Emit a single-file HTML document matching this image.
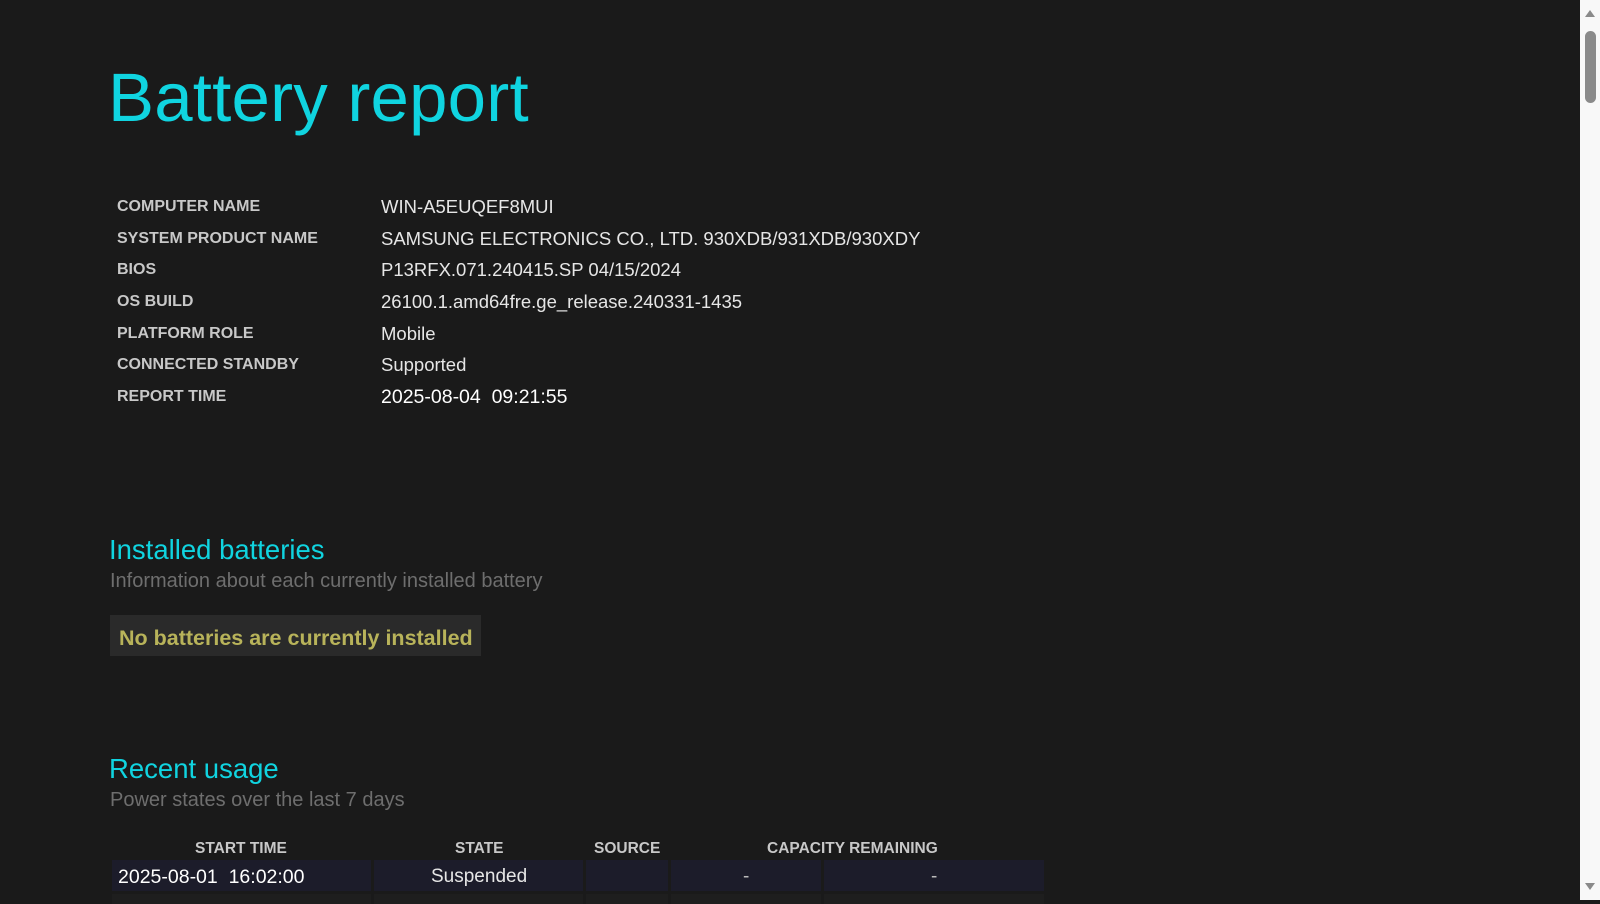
<!DOCTYPE html>
<html><head><meta charset="utf-8"><style>
html,body{margin:0;padding:0;width:1600px;height:900px;overflow:hidden;background:#1a1a1a;font-family:"Liberation Sans",sans-serif;}
.a{position:absolute;white-space:nowrap;}
.lab{color:#c8c8c8;font-size:16px;font-weight:bold;left:117px;}
.val{color:#e6e6e6;font-size:18.5px;left:381px;}
.h2{color:#10d4e0;font-size:27.5px;left:109px;}
.sub{color:#6e6e6e;font-size:20px;left:110px;}
.th{color:#c8c8c8;font-size:15.5px;font-weight:bold;top:840px;}
.cell{position:absolute;top:860px;height:31px;background:#1c1c2a;}
.row2{position:absolute;top:894px;height:10px;background:#1e1e1e;}
</style></head><body>
<div class="a" style="left:108px;top:58px;font-size:69px;color:#10d4e0;letter-spacing:0.2px;">Battery report</div>

<div class="a lab" style="top:198px">COMPUTER NAME</div><div class="a val" style="top:196px">WIN-A5EUQEF8MUI</div>
<div class="a lab" style="top:230px">SYSTEM PRODUCT NAME</div><div class="a val" style="top:228px">SAMSUNG ELECTRONICS CO., LTD. 930XDB/931XDB/930XDY</div>
<div class="a lab" style="top:261px">BIOS</div><div class="a val" style="top:259px">P13RFX.071.240415.SP 04/15/2024</div>
<div class="a lab" style="top:293px">OS BUILD</div><div class="a val" style="top:291px">26100.1.amd64fre.ge_release.240331-1435</div>
<div class="a lab" style="top:325px">PLATFORM ROLE</div><div class="a val" style="top:323px">Mobile</div>
<div class="a lab" style="top:356px">CONNECTED STANDBY</div><div class="a val" style="top:354px">Supported</div>
<div class="a lab" style="top:388px">REPORT TIME</div><div class="a val" style="top:386px;color:#fff;font-size:19.5px">2025-08-04&nbsp; 09:21:55</div>

<div class="a h2" style="top:534px">Installed batteries</div>
<div class="a sub" style="top:570px">Information about each currently installed battery</div>
<div class="a" style="left:110px;top:615px;width:371px;height:41px;background:#2a2a2a;"></div>
<div class="a" style="left:119px;top:626px;font-size:21.5px;font-weight:bold;color:#b8b35a;">No batteries are currently installed</div>

<div class="a h2" style="top:753px">Recent usage</div>
<div class="a sub" style="top:789px">Power states over the last 7 days</div>

<div class="a th" style="left:195px">START TIME</div>
<div class="a th" style="left:455px">STATE</div>
<div class="a th" style="left:594px">SOURCE</div>
<div class="a th" style="left:767px">CAPACITY REMAINING</div>
<div class="cell" style="left:112px;width:259px"></div>
<div class="cell" style="left:374px;width:209px"></div>
<div class="cell" style="left:586px;width:82px"></div>
<div class="cell" style="left:671px;width:150px"></div>
<div class="cell" style="left:824px;width:220px"></div>
<div class="row2" style="left:112px;width:259px"></div>
<div class="row2" style="left:374px;width:209px"></div>
<div class="row2" style="left:586px;width:82px"></div>
<div class="row2" style="left:671px;width:150px"></div>
<div class="row2" style="left:824px;width:220px"></div>
<div class="a" style="left:118px;top:866px;font-size:19.5px;color:#fff">2025-08-01&nbsp; 16:02:00</div>
<div class="a" style="left:431px;top:866px;font-size:19px;color:#e6e6e6">Suspended</div>
<div class="a" style="left:743px;top:866px;font-size:19px;color:#bbb">-</div>
<div class="a" style="left:931px;top:866px;font-size:19px;color:#bbb">-</div>

<div class="a" style="left:1580px;top:0;width:20px;height:900px;background:#f8f8f8;"></div>
<div class="a" style="left:1585px;top:31px;width:11px;height:72px;background:#8a8a8a;border-radius:6px;"></div>
<div class="a" style="left:1585px;top:10px;width:0;height:0;border-left:5px solid transparent;border-right:5px solid transparent;border-bottom:7px solid #8a8a8a;"></div>
<div class="a" style="left:1585px;top:883px;width:0;height:0;border-left:5px solid transparent;border-right:5px solid transparent;border-top:7px solid #8a8a8a;"></div>
</body></html>
